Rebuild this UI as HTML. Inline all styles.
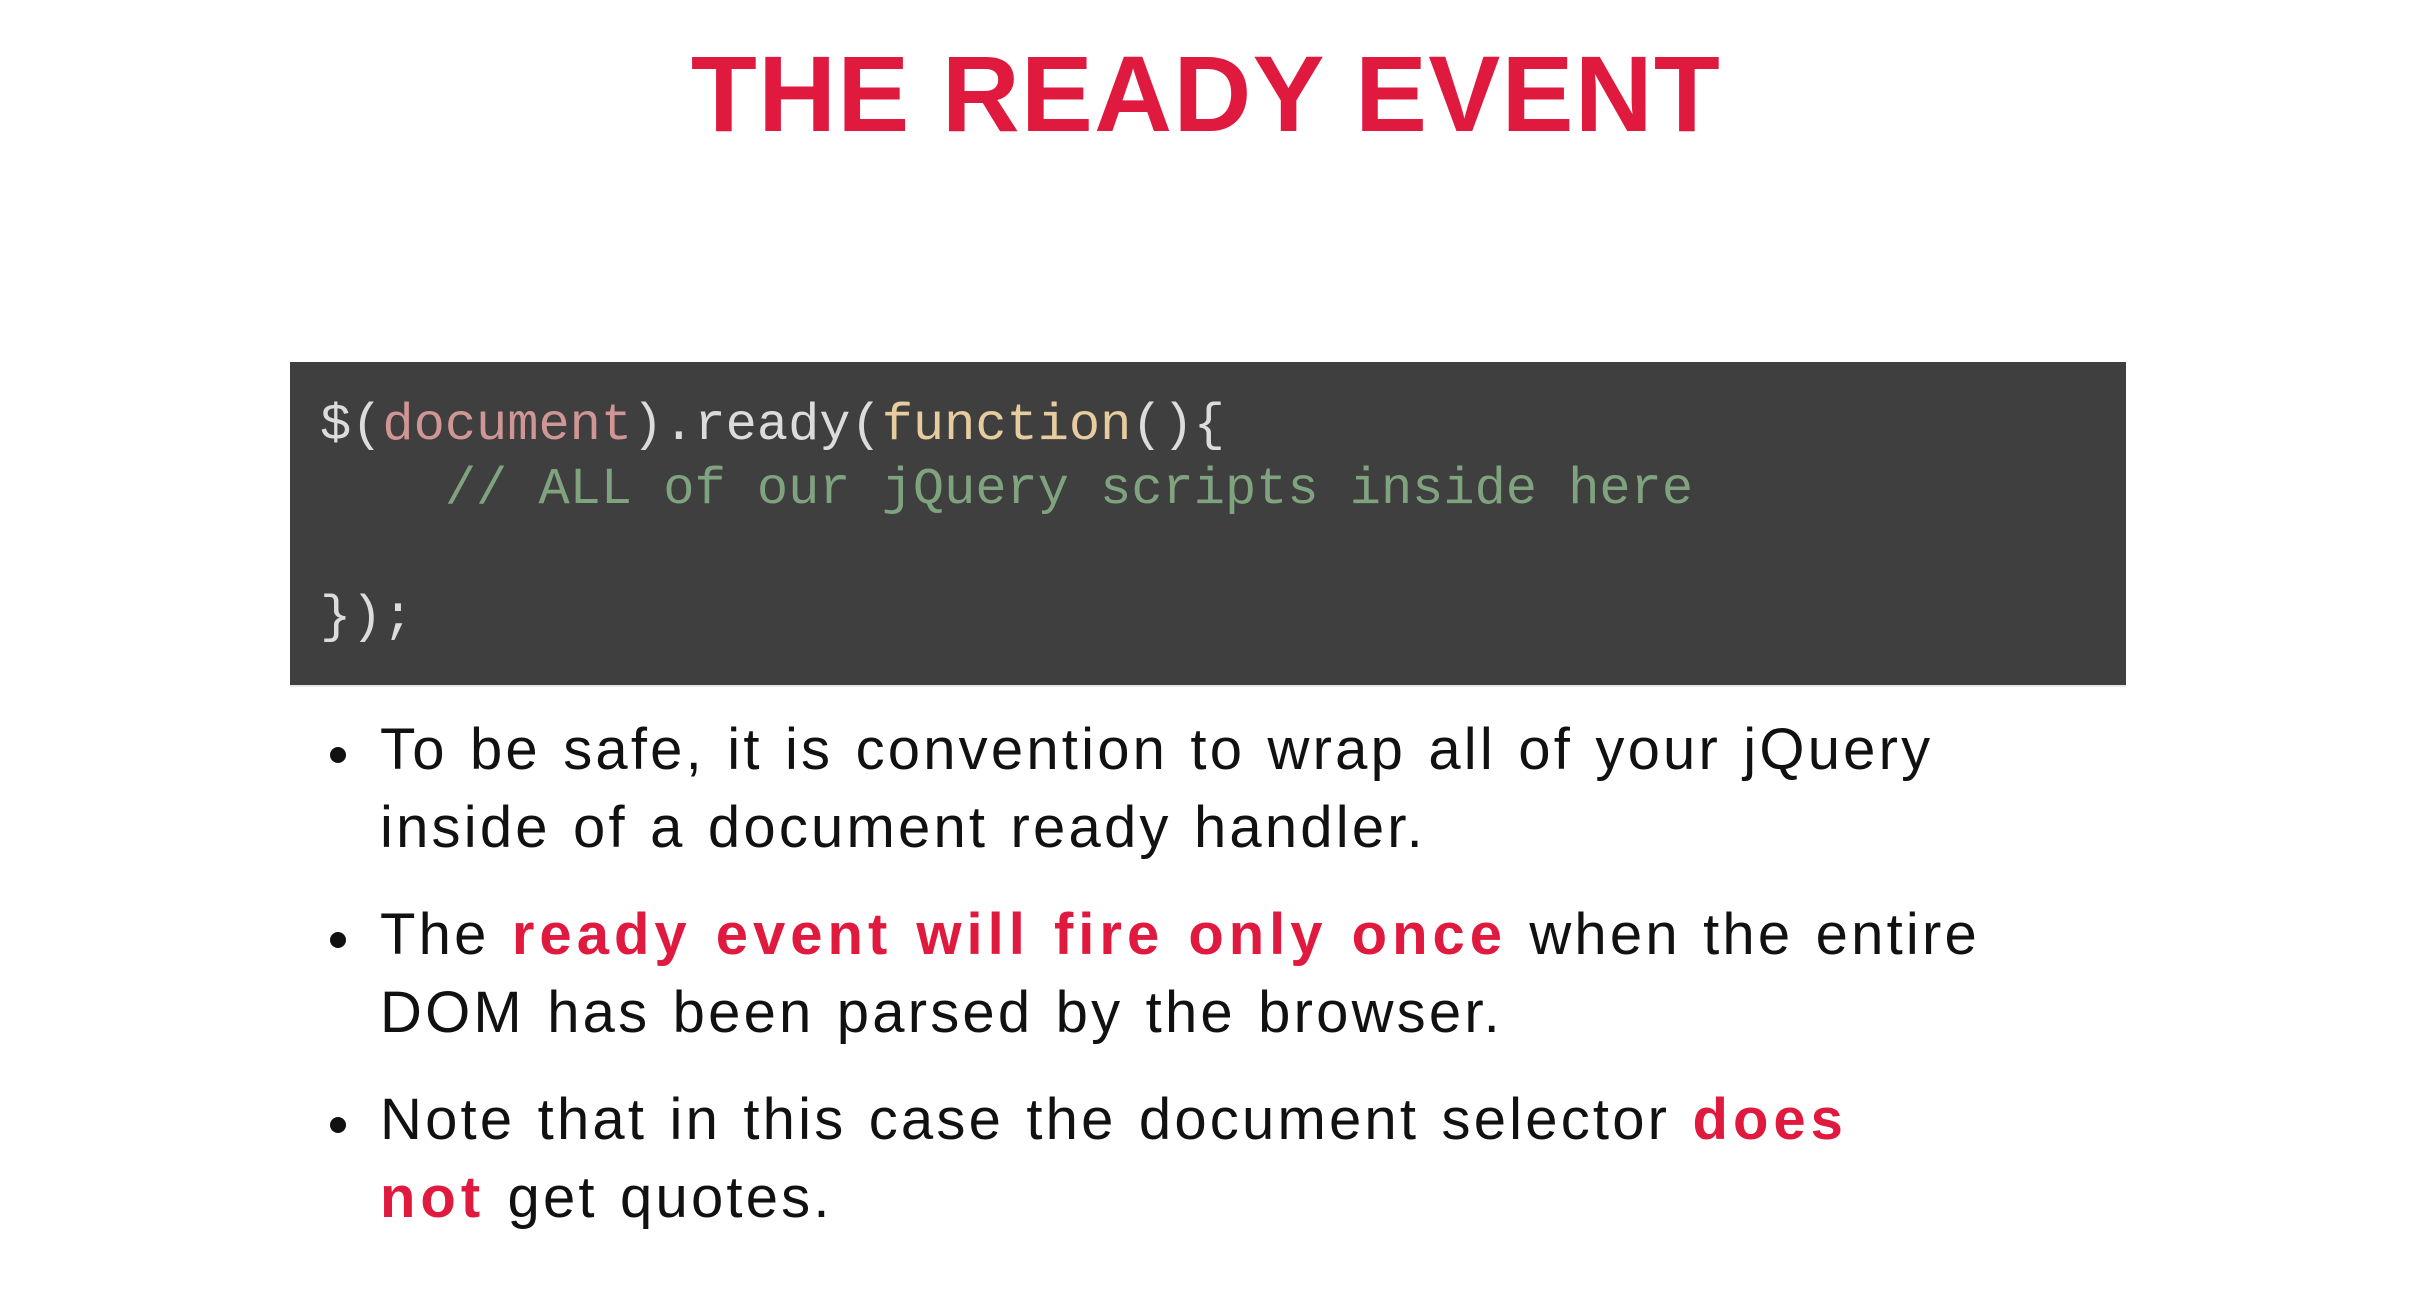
<!DOCTYPE html>
<html><head><meta charset="utf-8"><style>
html,body{margin:0;padding:0;background:#fff;width:2412px;height:1294px;overflow:hidden;position:relative}
h1{position:absolute;left:0;width:2412px;top:40px;margin:0;text-align:center;font:900 108px/1 "Liberation Sans",sans-serif;color:#e0193f;letter-spacing:1.2px}
.code{position:absolute;left:290px;top:362px;width:1836px;height:323px;background:#3f3f3f;border-bottom:2px solid #e8e8e8}
.code pre{margin:0;position:absolute;left:30px;top:32px;font:52px/64px "Liberation Mono",monospace;color:#dcdcdc}
.d{color:#d09696}.f{color:#e6cc9e}.c{color:#80a37f}
ul{position:absolute;left:380px;top:711px;margin:0;padding:0;list-style:none;font:58px/78px "Liberation Sans",sans-serif;color:#111;width:1900px;letter-spacing:3.2px;word-spacing:3px}
li{position:relative;margin-bottom:29px}
li:before{content:"";position:absolute;left:-50px;top:36px;width:16px;height:16px;border-radius:50%;background:#111}
b{color:#e0193f;font-weight:900;letter-spacing:5px}
</style></head><body>
<h1>THE READY EVENT</h1>
<div class="code"><pre>$(<span class="d">document</span>).ready(<span class="f">function</span>(){
    <span class="c">// ALL of our jQuery scripts inside here</span>

});</pre></div>
<ul>
<li>To be safe, it is convention to wrap all of your jQuery<br>inside of a document ready handler.</li>
<li>The <b>ready event will fire only once</b> when the entire<br>DOM has been parsed by the browser.</li>
<li>Note that in this case the document selector <b>does<br>not</b> get quotes.</li>
</ul>
</body></html>
